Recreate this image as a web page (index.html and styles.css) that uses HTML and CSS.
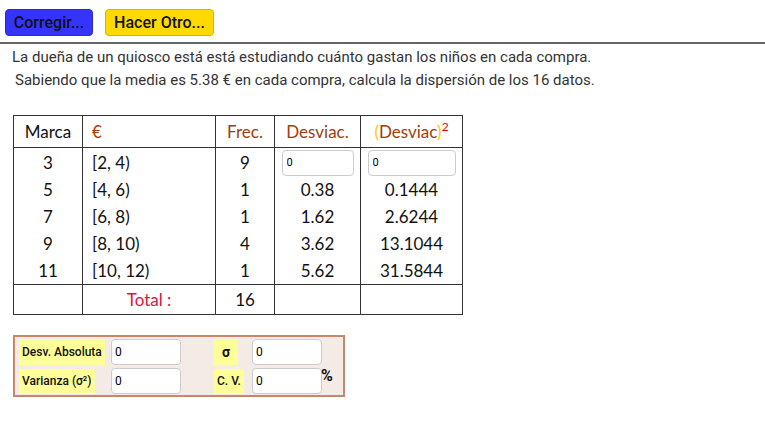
FILE: index.html
```html
<!DOCTYPE html>
<html lang="es">

<head>
    <meta charset="UTF-8">
    <meta name="viewport" content="width=device-width, initial-scale=1.0">
    <title>Dispersión</title>
    <link rel="stylesheet" href="styles.css">
</head>

<body>
    <div class="toolbar">
        <button class="btn btn-blue">Corregir...</button>
        <button class="btn btn-yellow">Hacer Otro...</button>
    </div>

    <div class="enunciado">
        <p>La dueña de un quiosco está está estudiando cuánto gastan los niños en cada compra.</p>
        <p class="second">Sabiendo que la media es 5.38 € en cada compra, calcula la dispersión de los 16 datos.</p>
    </div>

    <table class="datos">
        <colgroup>
            <col class="c-marca">
            <col class="c-int">
            <col class="c-frec">
            <col class="c-desv">
            <col class="c-desv2">
        </colgroup>
        <thead>
            <tr>
                <th>Marca</th>
                <th class="left brown">€</th>
                <th class="brown">Frec.</th>
                <th class="brown">Desviac.</th>
                <th class="brown"><span class="gold">(</span>Desviac<span class="gold">)</span><sup class="red">2</sup></th>
            </tr>
        </thead>
        <tbody>
            <tr class="first">
                <td>3</td>
                <td class="left">[2, 4)</td>
                <td>9</td>
                <td><input class="cell-input narrow" type="text" value="0"></td>
                <td><input class="cell-input wide" type="text" value="0"></td>
            </tr>
            <tr>
                <td>5</td>
                <td class="left">[4, 6)</td>
                <td>1</td>
                <td>0.38</td>
                <td>0.1444</td>
            </tr>
            <tr>
                <td>7</td>
                <td class="left">[6, 8)</td>
                <td>1</td>
                <td>1.62</td>
                <td>2.6244</td>
            </tr>
            <tr>
                <td>9</td>
                <td class="left">[8, 10)</td>
                <td>4</td>
                <td>3.62</td>
                <td>13.1044</td>
            </tr>
            <tr>
                <td>11</td>
                <td class="left">[10, 12)</td>
                <td>1</td>
                <td>5.62</td>
                <td>31.5844</td>
            </tr>
        </tbody>
        <tfoot>
            <tr>
                <td></td>
                <td class="total">Total :</td>
                <td>16</td>
                <td></td>
                <td></td>
            </tr>
        </tfoot>
    </table>

    <div class="resultados">
        <span class="etiqueta">Desv. Absoluta</span>
        <input class="res-input" type="text" value="0">
        <span></span>
        <span class="etiqueta sigma">σ</span>
        <input class="res-input" type="text" value="0">
        <span></span>

        <span class="etiqueta">Varianza (σ²)</span>
        <input class="res-input" type="text" value="0">
        <span></span>
        <span class="etiqueta">C. V.</span>
        <input class="res-input" type="text" value="0">
        <span class="pct">%</span>
    </div>
</body>

</html>
```

FILE: styles.css
```css
body {
    margin: 0;
    font-family: Roboto, "Liberation Sans", sans-serif;
    color: #222;
    background-color: white;
}

.toolbar {
    display: flex;
    gap: 12px;
    padding: 9px 0 0 5px;
    height: 44px;
    box-sizing: border-box;
    border-bottom: 2px solid #666;
}

.btn {
    height: 27px;
    padding: 0;
    white-space: nowrap;
    font-family: Roboto, "Liberation Sans", sans-serif;
    font-size: 16px;
    font-weight: 500;
    color: #111;
    border-radius: 4px;
    cursor: pointer;
}

.btn-blue {
    width: 88px;
    background-color: #3434fd;
    border: 1px solid #2a2ad0;
}

.btn-yellow {
    width: 109px;
    background-color: #ffd900;
    border: 1px solid #d6b400;
}

.enunciado {
    padding: 2px 0 0 12px;
    font-size: 15px;
    color: #333;
}

.enunciado p {
    margin: 0;
    line-height: 23px;
}

.enunciado .second {
    padding-left: 3px;
}

.datos {
    margin: 23px 0 0 13px;
    width: 449px;
    table-layout: fixed;
    border-collapse: collapse;
    font-family: Lato, "Open Sans", sans-serif;
    font-size: 17px;
    color: #111;
}

.c-marca { width: 69px; }
.c-int { width: 133px; }
.c-frec { width: 59px; }
.c-desv { width: 86px; }
.c-desv2 { width: 102px; }

.datos th,
.datos td {
    border-left: 1px solid #333;
    border-right: 1px solid #333;
    text-align: center;
    padding: 0;
    white-space: nowrap;
}

.datos th {
    height: 31px;
    font-weight: normal;
    border: 1px solid #333;
}

.datos tbody td {
    height: 27px;
    line-height: 27px;
}

.datos tbody tr.first td {
    padding-top: 1px;
}

.datos .left {
    text-align: left;
    padding-left: 9px;
}

.datos tfoot td {
    height: 29px;
    border: 1px solid #333;
}

.brown {
    color: #a23c0c;
}

.gold {
    color: #ffc800;
}

.datos th .red {
    color: #ff0000;
    font-size: 12px;
    vertical-align: top;
    line-height: 12px;
}

.total {
    color: #dc143c;
}

.cell-input {
    display: block;
    margin: 0 auto;
    height: 26px;
    box-sizing: border-box;
    padding: 0 4px;
    border: 1px solid #ccc;
    border-radius: 4px;
    font-family: Roboto, "Liberation Sans", sans-serif;
    font-size: 11px;
    color: #000;
}

.cell-input.narrow {
    width: 72px;
}

.cell-input.wide {
    width: 88px;
}

.resultados {
    display: grid;
    grid-template-columns: 86px 70px 21px 32px 70px 20px;
    grid-template-rows: 26px 26px;
    column-gap: 6px;
    row-gap: 3px;
    align-items: center;
    width: 332px;
    height: 62px;
    box-sizing: border-box;
    margin: 20px 0 0 13px;
    padding: 2px 0 0 4px;
    background-color: #f4ebe6;
    border: 2px solid #c8876a;
    font-size: 12px;
    font-weight: 500;
    color: #111;
}

.etiqueta {
    justify-self: start;
    display: flex;
    align-items: center;
    height: 25px;
    box-sizing: border-box;
    background-color: #ffff99;
    padding: 0 3px;
}

.etiqueta.sigma {
    padding: 0 8px;
    font-size: 14px;
    font-weight: bold;
}

.res-input {
    width: 70px;
    height: 26px;
    box-sizing: border-box;
    padding: 0 3px;
    border: 1px solid #ccc;
    border-radius: 4px;
    background-color: white;
    font-family: Roboto, "Liberation Sans", sans-serif;
    font-size: 12px;
    color: #000;
}

.pct {
    align-self: start;
    font-weight: bold;
    font-size: 16px;
    line-height: 16px;
    margin: 0 0 0 -7px;
}
```
